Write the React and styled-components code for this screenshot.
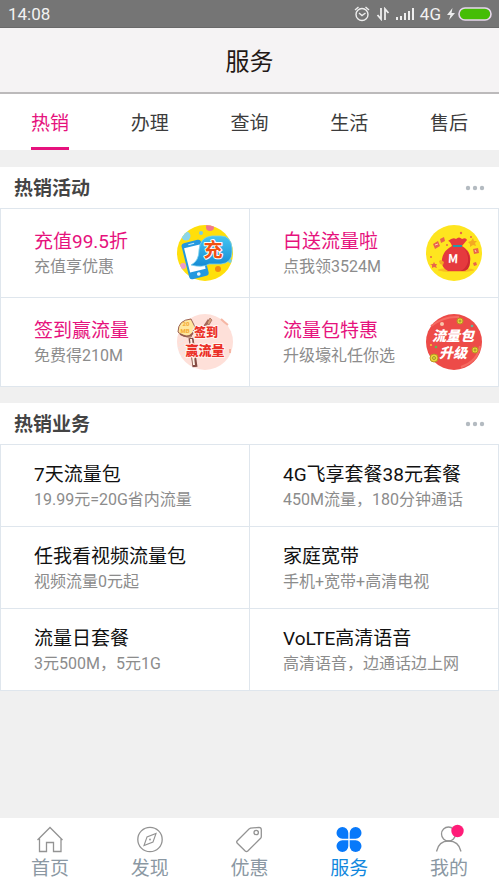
import React from "react";
import styled, { createGlobalStyle } from "styled-components";

const PINK = "#e6127d";
const LINE = "#dfe6ed";

const GlobalStyle = createGlobalStyle`
  * { box-sizing: border-box; }
  body {
    margin: 0;
    background: #f0f0f0;
    font-family: Roboto, "Noto Sans CJK SC", sans-serif;
  }
  button { border: 0; background: none; padding: 0; font: inherit; cursor: pointer; }
  a { color: inherit; text-decoration: none; }
  h1, h2, h3, p { margin: 0; font-weight: 400; }
`;

const Screen = styled.div`
  display: flex;
  flex-direction: column;
  min-height: 100vh;
`;

const StatusBar = styled.div`
  display: flex;
  align-items: center;
  justify-content: space-between;
  height: 28px;
  padding: 0 7px 0 8px;
  border-bottom: 1px solid #696969;
  background: #757575;
  color: #f2f2f2;
  font-size: 17px;
`;

const StatusIcons = styled.div`
  display: flex;
  align-items: center;
  gap: 6px;
`;

const Power = styled.span`
  display: flex;
  align-items: center;
  gap: 3px;
`;

const Header = styled.header`
  display: flex;
  align-items: center;
  justify-content: center;
  height: 66px;
  padding-top: 4px;
  border-bottom: 2px solid #bcbabb;
  background: #f5f3f4;
  box-shadow: 0 1px 1px #e4e2e3;
`;

const HeaderTitle = styled.h1`
  color: #231815;
  font-size: 24px;
  line-height: 36px;
`;

const Tabs = styled.nav`
  display: grid;
  grid-template-columns: repeat(5, 1fr);
  justify-items: center;
  height: 56px;
  background: #fff;
`;

const Tab = styled.button`
  height: 56px;
  && {
    padding-top: 4px;
    border-top: 3px solid transparent;
    border-bottom: 3px solid ${(p) => (p.$active ? PINK : "transparent")};
    color: ${(p) => (p.$active ? PINK : "#3c3c3c")};
    font-size: 19px;
    line-height: 28px;
  }
`;

const Main = styled.main`
  display: flex;
  flex: 1;
  flex-direction: column;
  gap: 16px;
  padding: 17px 0;
`;

const Section = styled.section`
  background: #fff;
`;

const SectionHead = styled.div`
  display: flex;
  align-items: center;
  justify-content: space-between;
  height: 41px;
  padding: 0 14px;
`;

const SectionTitle = styled.h2`
  && { font-weight: 700; }
  padding-top: 2px;
  color: #444;
  font-size: 19px;
  line-height: 28px;
`;

const MoreButton = styled.button`
  display: flex;
  align-items: center;
  height: 28px;
`;

const Grid = styled.div`
  display: grid;
  grid-template-columns: 1fr 1fr;
  gap: 1px;
  padding: 1px;
  background: ${LINE};
`;

const Card = styled.a`
  display: flex;
  align-items: center;
  justify-content: space-between;
  min-width: 0;
  min-height: ${(p) => (p.$promo ? 88 : 81)}px;
  padding: 0 ${(p) => (p.$promo ? 16 : 0)}px 0 33px;
  background: #fff;
  white-space: nowrap;
`;

const CardText = styled.div`
  padding-top: 2px;
`;

const CardTitle = styled.h3`
  color: ${(p) => (p.$promo ? PINK : "#111")};
  font-size: 19px;
  line-height: 26px;
`;

const CardNote = styled.p`
  color: #8c8c8c;
  font-size: 16px;
  line-height: 24px;
`;

const Art = styled.svg`
  flex: none;
  overflow: visible;
  width: 56px;
  height: 56px;
  font-family: "Noto Sans CJK SC", sans-serif;
  font-weight: 900;
`;

const CoinText = styled.text`
  fill: #f5ae3b;
  font-family: Roboto, sans-serif;
  font-size: 6px;
`;

const BottomNav = styled.nav`
  display: grid;
  grid-template-columns: repeat(5, 1fr);
  height: 69px;
  background: #fff;
`;

const NavItem = styled.a`
  display: flex;
  flex-direction: column;
  align-items: center;
  padding-top: 6px;
  color: ${(p) => (p.$active ? "#1288de" : "#8b98a3")};
  font-size: 19px;
  line-height: 30px;
`;

const NavIcon = styled.svg`
  width: 32px;
  height: 30px;
  fill: none;
  stroke: #939393;
  stroke-width: 1.3;
`;

const RechargeArt = () => (
  <Art viewBox="0 0 56 56" aria-hidden="true">
    <defs>
      <clipPath id="rechargeClip"><circle cx="28" cy="28" r="28" /></clipPath>
      <linearGradient id="bubble" x1="0" y1="0" x2="0" y2="1">
        <stop offset="0" stopColor="#45c5f2" />
        <stop offset="1" stopColor="#168bd4" />
      </linearGradient>
    </defs>
    <g clipPath="url(#rechargeClip)">
      <rect width="56" height="56" fill="#ffdf0b" />
      <circle cx="9" cy="11" r="4.5" fill="#8bd5e9" />
      <circle cx="33" cy="2" r="4" fill="#ee7890" />
      <circle cx="24" cy="8" r="2" fill="#76cce4" />
      <circle cx="6" cy="41" r="3" fill="#ed9bcb" />
      <circle cx="41" cy="44" r="3" fill="#f28b13" />
      <circle cx="53" cy="36" r="2" fill="#73cce4" />
    </g>
    <g transform="rotate(-14 18 34)">
      <rect x="8" y="16" width="20" height="37" rx="3" fill="#2398df" />
      <rect x="10" y="21" width="16" height="25" fill="#fff" />
      <path d="M15 18.5h6" stroke="#bfeaff" strokeWidth="1" />
      <circle cx="18" cy="49.5" r="1.8" fill="#e6f6ff" />
    </g>
    <path d="M35 11Q23 12 22 25Q22 36 14 40Q26 43 32 39H44Q55 38 55 27V23Q54 11 44 11Z" fill="url(#bubble)" stroke="#79d0ee" strokeWidth=".8" />
    <text x="36" y="32" textAnchor="middle" fontSize="19" fontWeight="700" fill="#f05013" stroke="#fff" strokeWidth="2" strokeLinejoin="round" paintOrder="stroke">充</text>
  </Art>
);

const GiftArt = () => (
  <Art viewBox="0 0 56 56" aria-hidden="true">
    <circle cx="28" cy="28" r="28" fill="#fee51f" />
    <ellipse cx="30" cy="45" rx="18" ry="2" fill="#f8bc20" />
    <path d="M26 21Q24 16 22 16Q27 12 30 14Q33 11 36 14Q40 12 41 15L36 21Q46 27 44 37Q42 46 37 46H22Q15 43 16 34Q17 26 26 21Z" fill="#e53a3e" />
    <path d="M36 22Q43 27 42 37Q40 44 34 46Q44 47 44 37Q44 27 36 22Z" fill="#cf2931" />
    <path d="M27 21h9" stroke="#2796ac" strokeWidth="2" />
    <text x="27" y="38" textAnchor="middle" fontSize="12" fontWeight="700" fill="#fff" transform="rotate(3 27 34)">M</text>
    <g fill="#e9654a">
      <path d="M7 19l5-3 2 5-5 3zM14 14l4-2 1 4-4 2zM47 24l5-1 1 5-5 1zM47 38l3-1 1 3-3 1z" />
      <path d="M8 37l1 2 2 0-1 2 1 2-3-1-2 1 0-3-2-1 3 0z" />
      <circle cx="35" cy="8" r="1.2" /><circle cx="21" cy="20" r="1" />
      <circle cx="45" cy="12" r="1" /><circle cx="5" cy="32" r="1" />
    </g>
    <path d="M47 13l1 3 3 0-2 2 1 3-3-1-3 2 0-3-2-2 3-1zM15 35l3 2-1 3-3-1-1-3z" fill="#f4aa21" />
    <path d="M9 20l3-1M49 25l1 2" stroke="#ffd1b7" />
  </Art>
);

const SignInArt = () => (
  <Art viewBox="0 0 56 56" aria-hidden="true">
    <circle cx="28" cy="28" r="28" fill="#fee0d9" />
    <path d="M2 29l5-3M1 34l7-4M2 39l8-5M4 43l6-4" stroke="#eee9e8" />
    <path d="M44 5q3 3 7 6M53 35v4" stroke="#f6b7a5" strokeWidth="2" />
    <path d="M32 6L24 18" stroke="#a66859" strokeWidth="3" />
    <path d="M33 4l2 2-3 5-2-2z" fill="#d6a079" stroke="#91564b" strokeWidth=".6" />
    <path d="M14 24L18 53" stroke="#854c45" strokeWidth="5" />
    <path d="M14 25L17 51" stroke="#fff3e7" strokeWidth="2" />
    <path d="M1 18Q1 6 14 5L18 13L14 23Q7 24 1 18Z" fill="#ffe79e" stroke="#9b6152" />
    <path d="M3 20Q11 25 16 19" fill="none" stroke="#965d50" strokeWidth="1.5" />
    <CoinText x="9" y="12" textAnchor="middle">20</CoinText>
    <CoinText x="8" y="19" textAnchor="middle">MB</CoinText>
    <g textAnchor="middle" fill="#eb3027" stroke="#fff4ef" strokeWidth="2" paintOrder="stroke">
      <text x="29" y="23" fontSize="12">签到</text>
      <text x="28" y="41" fontSize="13">赢流量</text>
    </g>
  </Art>
);

const UpgradeArt = () => (
  <Art viewBox="0 0 56 56" aria-hidden="true">
    <circle cx="28" cy="28" r="28" fill="#ed4b48" />
    <path d="M5 12Q18 2 33 3M35 53Q52 47 54 32" fill="none" stroke="#f56b62" strokeWidth="2" />
    <g fill="#ecd53b" stroke="#b79722">
      <circle cx="34" cy="7" r="3" /><circle cx="49" cy="36" r="3" />
      <circle cx="8" cy="44" r="4" />
    </g>
    <g fill="none" stroke="#8d8a28" strokeWidth=".8">
      <circle cx="34" cy="7" r="1" /><circle cx="49" cy="36" r="1" /><circle cx="8" cy="44" r="1.5" />
    </g>
    <circle cx="16" cy="10" r="2" fill="#f8c6ac" />
    <circle cx="46" cy="12" r="1.3" fill="#5bbba0" />
    <circle cx="10" cy="33" r="1.3" fill="#62b954" />
    <circle cx="5" cy="31" r="1" fill="#f3cc37" />
    <g fill="#fff" textAnchor="middle" fontStyle="italic">
      <text x="27" y="27" fontSize="14">流量包</text>
      <text x="27" y="44" fontSize="14">升级</text>
    </g>
  </Art>
);

const ICONS = {
  home: <path d="M3.5 16L16 3.5L28.5 16M5.5 14.5V27.5H12.5V18.5H19.5V27.5H27V14.5" />,
  compass: (
    <>
      <circle cx="16" cy="15.5" r="12.2" />
      <path d="M22 9.5L19 18L10 21.5L13 13Z" strokeWidth="1.1" />
      <circle cx="16" cy="15.5" r=".9" fill="#939393" stroke="none" />
    </>
  ),
  tag: (
    <>
      <path d="M17.5 4.2L26 3.4Q28.3 3.4 28.3 5.7V12.5Q28.3 13.5 27.6 14.3L14.8 27Q13.5 28.2 12.2 27L4.3 19.2Q3.1 18 4.3 16.8L16 5Z" />
      <circle cx="23.2" cy="8.5" r="2.2" />
    </>
  ),
  clover: (
    <g fill="#0879fa" stroke="none">
      <path d="M15.3 14.8H9.4A5.9 5.9 0 1 1 15.3 8.9Z" />
      <path d="M16.7 14.8H22.6A5.9 5.9 0 1 0 16.7 8.9Z" />
      <path d="M15.3 16.2H9.4A5.9 5.9 0 1 0 15.3 22.1Z" />
      <path d="M16.7 16.2H22.6A5.9 5.9 0 1 1 16.7 22.1Z" />
    </g>
  ),
  user: (
    <>
      <circle cx="15.5" cy="10" r="7" />
      <path d="M3.5 27.5C5 20.5 9.5 17 15.5 17S26.5 20.5 28 27.5" />
      <circle cx="24.5" cy="7" r="6.2" fill="#ff1c78" stroke="none" />
    </>
  ),
};

const tabs = ["热销", "办理", "查询", "生活", "售后"];

const promos = [
  { title: "充值99.5折", note: "充值享优惠", Picture: RechargeArt },
  { title: "白送流量啦", note: "点我领3524M", Picture: GiftArt },
  { title: "签到赢流量", note: "免费得210M", Picture: SignInArt },
  { title: "流量包特惠", note: "升级壕礼任你选", Picture: UpgradeArt },
];

const services = [
  { title: "7天流量包", note: "19.99元=20G省内流量" },
  { title: "4G飞享套餐38元套餐", note: "450M流量，180分钟通话" },
  { title: "任我看视频流量包", note: "视频流量0元起" },
  { title: "家庭宽带", note: "手机+宽带+高清电视" },
  { title: "流量日套餐", note: "3元500M，5元1G" },
  { title: "VoLTE高清语音", note: "高清语音，边通话边上网" },
];

const navItems = [
  { label: "首页", icon: "home" },
  { label: "发现", icon: "compass" },
  { label: "优惠", icon: "tag" },
  { label: "服务", icon: "clover" },
  { label: "我的", icon: "user" },
];

function CardSection({ title, items, promo }) {
  return (
    <Section>
      <SectionHead>
        <SectionTitle>{title}</SectionTitle>
        <MoreButton aria-label={`更多${title}`}>
          <svg width="20" height="6" viewBox="0 0 20 6" fill="#b4bbc1">
            <circle cx="3" cy="3" r="2.2" />
            <circle cx="10" cy="3" r="2.2" />
            <circle cx="17" cy="3" r="2.2" />
          </svg>
        </MoreButton>
      </SectionHead>
      <Grid>
        {items.map(({ title: name, note, Picture }) => (
          <Card key={name} href="#" $promo={promo}>
            <CardText>
              <CardTitle $promo={promo}>{name}</CardTitle>
              <CardNote>{note}</CardNote>
            </CardText>
            {Picture && <Picture />}
          </Card>
        ))}
      </Grid>
    </Section>
  );
}

export default function App() {
  return (
    <Screen>
      <GlobalStyle />
      <StatusBar>
        <span>14:08</span>
        <StatusIcons>
          <svg width="16" height="16" viewBox="0 0 16 16" fill="none" stroke="#eee" strokeWidth="1.4">
            <circle cx="8" cy="8.5" r="6" />
            <path d="M1 4L4.5 1M15 4L11.5 1M5 7L8 9.5L11.5 7" />
          </svg>
          <svg width="14" height="14" viewBox="0 0 14 14" fill="none" stroke="#eee" strokeWidth="1.8">
            <path d="M5 1V12L1.5 8M9 13V2L12.5 6" />
          </svg>
          <svg width="18" height="14" viewBox="0 0 18 14" fill="#eee">
            <path d="M0 10h2v3H0zM4 9h2v4H4zM8 6h2v7H8zM12 4h2v9h-2zM16 1h2v12h-2z" />
          </svg>
          <span>4G</span>
          <Power>
            <svg width="8" height="14" viewBox="0 0 8 14" fill="#eee">
              <path d="M5.5 1L0 8H3.5L2 13L8 6H4.5Z" />
            </svg>
            <svg width="34" height="14" viewBox="0 0 34 14">
              <rect x="1" y="1" width="32" height="12" rx="6" fill="#45bd06" stroke="#e7d6ed" strokeWidth="1.6" />
            </svg>
          </Power>
        </StatusIcons>
      </StatusBar>
      <Header>
        <HeaderTitle>服务</HeaderTitle>
      </Header>
      <Tabs aria-label="服务分类">
        {tabs.map((name, i) => (
          <Tab key={name} $active={i === 0}>{name}</Tab>
        ))}
      </Tabs>
      <Main>
        <CardSection title="热销活动" items={promos} promo />
        <CardSection title="热销业务" items={services} />
      </Main>
      <BottomNav aria-label="主导航">
        {navItems.map(({ label, icon }) => (
          <NavItem key={label} href="#" $active={icon === "clover"}>
            <NavIcon viewBox="0 0 32 30" aria-hidden="true">{ICONS[icon]}</NavIcon>
            {label}
          </NavItem>
        ))}
      </BottomNav>
    </Screen>
  );
}
